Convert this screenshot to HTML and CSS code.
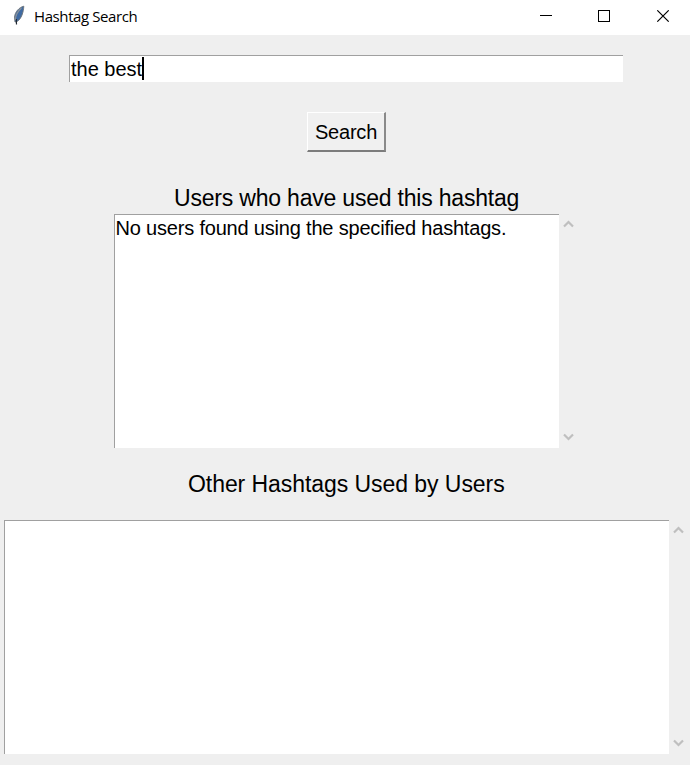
FILE: index.html
```html
<!DOCTYPE html>
<html lang="en">
<head>
<meta charset="utf-8">
<title>Hashtag Search</title>
<link rel="stylesheet" href="styles.css">
</head>
<body>
<header class="titlebar">
  <svg class="feather" width="14" height="22" viewBox="0 0 14 22">
    <path d="M11.800 1.200C7 2.400 3 7 2.500 12L3 17 5 16.500C9.500 14 11.500 7 11.800 1.200Z" fill="#3f6ba3" stroke="#6b7278" stroke-width=".9"/>
    <path d="M9.500 3C6 6 3.500 10 3.300 15" fill="none" stroke="#8b9299" stroke-width="1.200"/>
    <path d="M4.500 14C4.200 16 4.500 18 4.500 19.500" fill="none" stroke="#222a33" stroke-width="1.200"/>
  </svg>
  <h1 class="title">Hashtag Search</h1>
  <svg class="controls" width="130" height="12" viewBox="0 0 130 12" fill="none" stroke="#000">
    <path d="M0 5.500H12M58.500 .5H69.500V11.500H58.500Z" shape-rendering="crispEdges"/>
    <path d="M117.300 .3L128.700 11.700M128.700 .3L117.300 11.700" stroke-width="1.100"/>
  </svg>
</header>
<main class="content">
  <div class="entry sunken"><span class="entry-text">the best</span><span class="caret"></span></div>
  <button class="search"><span class="search-text">Search</span></button>
  <h2 class="heading users-heading"><span>Users who have used this hashtag</span></h2>
  <section class="list-row users">
    <div class="list sunken"><span class="item">No users found using the specified hashtags.</span></div>
    <div class="scrollbar">
      <svg width="11" height="8" viewBox="0 0 11 8"><path d="M1 6.500L5.500 2L10 6.500"/></svg>
      <svg width="11" height="8" viewBox="0 0 11 8"><path d="M1 1.500L5.500 6L10 1.500"/></svg>
    </div>
  </section>
  <h2 class="heading tags-heading"><span>Other Hashtags Used by Users</span></h2>
  <section class="list-row tags">
    <div class="list sunken"></div>
    <div class="scrollbar">
      <svg width="11" height="8" viewBox="0 0 11 8"><path d="M1 6.500L5.500 2L10 6.500"/></svg>
      <svg width="11" height="8" viewBox="0 0 11 8"><path d="M1 1.500L5.500 6L10 1.500"/></svg>
    </div>
  </section>
</main>
</body>
</html>
```
FILE: styles.css
```css
* { box-sizing: border-box; }
body {
  margin: 0;
  height: 765px;
  overflow: hidden;
  background: #efefef;
  color: #000;
  font-family: "Liberation Sans", Arial, sans-serif;
  font-size: 20px;
}
svg { display: block; }
.titlebar {
  display: flex;
  height: 35px;
  background: #fff;
}
.feather { margin: 5px 0 0 12px; }
.title {
  margin: 5px 0 0 8px;
  font: 400 15px/22px "Open Sans", "Noto Sans", sans-serif;
  letter-spacing: -0.4px;
  white-space: nowrap;
}
.controls { margin: 10px 20px 0 auto; }
.content {
  display: flex;
  flex-direction: column;
  padding-top: 20px;
}
.sunken {
  background: #fff;
  border: solid #a0a0a0;
  border-width: 1px 0 0 1px;
}
.entry {
  display: flex;
  width: 554px;
  height: 27px;
  margin-left: 69px;
  padding: 1px;
  line-height: 25px;
}
.caret { width: 2px; height: 23px; background: #000; }
.search {
  width: 79px;
  height: 40px;
  margin: 30px 0 0 307px;
  padding: 2px 0 0;
  border: solid;
  border-width: 1px 2px 2px 1px;
  border-color: #fff #8a8a8a #7c7c7c #fff;
  background: #f0f0f0;
  color: #000;
  font: inherit;
  letter-spacing: -0.2px;
}
.heading {
  margin: 0;
  font-size: 23px;
  font-weight: 400;
  line-height: 28px;
  white-space: nowrap;
}
.users-heading { margin: 32px 0 0 174px; letter-spacing: -0.2px; }
.tags-heading { margin: 22px 0 0 188px; letter-spacing: -0.06px; }
.list-row { display: flex; }
.users { height: 234px; margin: 2px 0 0 114px; }
.users .list { width: 445px; }
.tags { height: 234px; margin: 22px 0 0 4px; }
.tags .list { width: 665px; }
.list { padding: 1px; line-height: 25px; white-space: nowrap; }
.item { display: block; margin-left: -0.5px; letter-spacing: -0.19px; }
.scrollbar {
  display: flex;
  flex-direction: column;
  justify-content: space-between;
  margin-left: 4px;
  padding: 6px 0 7px;
}
.scrollbar path { fill: none; stroke: #bfbfbf; stroke-width: 2.2; }
```
